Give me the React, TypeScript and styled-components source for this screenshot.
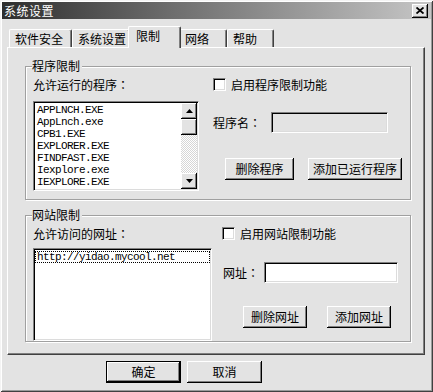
import React from 'react';
import styled, { createGlobalStyle } from 'styled-components';

const FACE = '#e3e3e3';

const GlobalStyle = createGlobalStyle`
  html, body {
    margin: 0;
    padding: 0;
    background: ${FACE};
  }
  body {
    font-family: "Noto Sans CJK SC", "Liberation Sans", sans-serif;
    font-size: 12px;
    color: #000;
  }
`;

const Window = styled.div`
  box-sizing: border-box;
  width: 433px;
  height: 392px;
  padding: 2px;
  background: ${FACE};
  box-shadow: inset 1px 1px #f4f4f4, inset -1px -1px #404040, inset 2px 2px #fff, inset -2px -2px #9a9a9a;
  display: flex;
  flex-direction: column;
`;

const TitleBar = styled.div`
  height: 17px;
  display: flex;
  align-items: center;
  justify-content: space-between;
  padding: 0 3px 0 2px;
  background: linear-gradient(90deg, #2e2e2e 0%, #6e6e6e 40%, #c6c6c6 100%);
`;

const TitleText = styled.span`
  color: #fff;
  font-size: 12px;
  line-height: 12px;
  letter-spacing: 0.5px;
`;

const CloseButton = styled.div`
  box-sizing: border-box;
  width: 16px;
  height: 14px;
  background: ${FACE};
  box-shadow: inset -1px -1px #000, inset 1px 1px #fff, inset -2px -2px #808080;
  display: flex;
  align-items: center;
  justify-content: center;
  padding: 0 1px 1px 0;
`;

const TabStrip = styled.div`
  display: flex;
  align-items: flex-end;
  height: 28px;
  padding-left: 7px;
  position: relative;
  z-index: 1;
`;

const Tab = styled.div<{ $w: number; $active?: boolean }>`
  box-sizing: border-box;
  width: ${p => p.$w}px;
  height: ${p => (p.$active ? 22 : 18)}px;
  margin: 0 ${p => (p.$active ? -2 : 0)}px ${p => (p.$active ? -1 : 0)}px;
  padding: 3px 0 0 ${p => (p.$active ? 7 : 5)}px;
  line-height: 12px;
  white-space: nowrap;
  background: ${FACE};
  border-top: 1px solid #fff;
  border-left: 1px solid #fff;
  border-right: 1px solid #404040;
  box-shadow: inset -1px 0 #808080;
  border-radius: 2px 2px 0 0;
  position: relative;
  z-index: ${p => (p.$active ? 2 : 1)};
`;

const Panel = styled.div`
  margin: 0 6px 0 5px;
  border: 1px solid;
  border-color: #fff #404040 #404040 #fff;
  box-shadow: inset -1px -1px #808080;
  padding: 18px 13px 12px 17px;
  display: flex;
  flex-direction: column;
  gap: 15px;
`;

const Group = styled.div<{ $colGap: number; $bottom: number }>`
  position: relative;
  border: 1px solid #a0a0a0;
  box-shadow: inset 1px 1px #fff, 1px 1px #fff;
  padding: 12px 0 ${p => p.$bottom}px 7px;
  display: flex;
  gap: ${p => p.$colGap}px;
`;

const Legend = styled.span`
  position: absolute;
  top: -7px;
  left: 6px;
  line-height: 12px;
  padding-right: 2px;
  background: ${FACE};
`;

const LeftColumn = styled.div<{ $gap: number }>`
  display: flex;
  flex-direction: column;
  gap: ${p => p.$gap}px;
`;

const Label = styled.span`
  line-height: 12px;
  white-space: nowrap;
`;

// full-width colon drawn centred, as in the old bitmap font
const Colon = styled.span`
  font-family: "Noto Sans CJK JP", "Noto Sans CJK SC", sans-serif;
`;

const ListBox = styled.div<{ $w: number; $h: number }>`
  box-sizing: border-box;
  width: ${p => p.$w}px;
  height: ${p => p.$h}px;
  background: #fff;
  border: 1px solid;
  border-color: #808080 #fff #fff #808080;
  box-shadow: inset 1px 1px #000, inset -1px -1px #dcdcdc;
  padding: 1px;
  display: flex;
`;

const Items = styled.div`
  flex: 1;
  overflow: hidden;
  padding-top: 1px;
`;

const Item = styled.div<{ $focus?: boolean }>`
  font-family: "Liberation Mono", "DejaVu Sans Mono", monospace;
  font-size: 11px;
  letter-spacing: -0.6px;
  line-height: 12px;
  padding-left: 2px;
  white-space: nowrap;
  outline: ${p => (p.$focus ? '1px dotted #000' : 'none')};
  outline-offset: -1px;
`;

const ScrollBar = styled.div`
  width: 16px;
  display: flex;
  flex-direction: column;
  background: repeating-conic-gradient(#fff 0 25%, #d6d6d6 0 50%) 0 0 / 2px 2px;
`;

const ScrollButton = styled.div`
  box-sizing: border-box;
  width: 16px;
  height: 16px;
  background: ${FACE};
  box-shadow: inset -1px -1px #000, inset 1px 1px #fff, inset -2px -2px #808080;
  display: flex;
  align-items: center;
  justify-content: center;
`;

const Thumb = styled(ScrollButton)`
  margin-bottom: auto;
`;

const RightColumn = styled.div`
  display: flex;
  flex-direction: column;
`;

const CheckRow = styled.label`
  display: flex;
  align-items: center;
  gap: 5px;
  line-height: 12px;
  margin-top: -1px;
`;

const CheckBox = styled.span`
  box-sizing: border-box;
  width: 13px;
  height: 13px;
  background: #fff;
  border: 1px solid;
  border-color: #808080 #fff #fff #808080;
  box-shadow: inset 1px 1px #000, inset -1px -1px #dcdcdc;
`;

const FieldRow = styled.div<{ $top: number; $gap: number; $indent: number }>`
  display: flex;
  align-items: center;
  margin-top: ${p => p.$top}px;
  padding-left: ${p => p.$indent}px;
  gap: ${p => p.$gap}px;
`;

const TextField = styled.div<{ $w: number; $disabled?: boolean }>`
  box-sizing: border-box;
  width: ${p => p.$w}px;
  height: 21px;
  background: ${p => (p.$disabled ? FACE : '#fff')};
  border: 1px solid;
  border-color: #808080 #fff #fff #808080;
  box-shadow: inset 1px 1px #000, inset -1px -1px #dcdcdc;
`;

const ButtonRow = styled.div<{ $top: number; $gap: number; $indent: number }>`
  display: flex;
  margin-top: ${p => p.$top}px;
  padding-left: ${p => p.$indent}px;
  gap: ${p => p.$gap}px;
`;

const Button = styled.button<{ $w: number; $default?: boolean }>`
  box-sizing: border-box;
  width: ${p => p.$w}px;
  height: 22px;
  padding: 0;
  font-family: "Noto Sans CJK SC", "Liberation Sans", sans-serif;
  font-size: 12px;
  line-height: 12px;
  color: #000;
  background: ${FACE};
  border: ${p => (p.$default ? '1px solid #000' : 'none')};
  box-shadow: inset -1px -1px #000, inset 1px 1px #fff, inset -2px -2px #808080;
  white-space: nowrap;
`;

const DialogButtons = styled.div`
  display: flex;
  gap: 6px;
  margin-top: 6px;
  padding-left: 104px;
`;

const Arrow = ({ down }: { down?: boolean }) => (
  <svg width="7" height="4" viewBox="0 0 7 4">
    <polygon points={down ? '0,0 7,0 3.5,4' : '3.5,0 7,4 0,4'} fill="#000" />
  </svg>
);

const CloseIcon = () => (
  <svg width="8" height="7" viewBox="0 0 8 7">
    <path d="M0.5 0.5 L7.5 6.5 M7.5 0.5 L0.5 6.5" stroke="#000" strokeWidth="1.8" />
  </svg>
);

const programs = [
  'APPLNCH.EXE',
  'AppLnch.exe',
  'CPB1.EXE',
  'EXPLORER.EXE',
  'FINDFAST.EXE',
  'Iexplore.exe',
  'IEXPLORE.EXE',
  'INTERNAT.EXE',
];

const tabs = [
  { label: '软件安全', w: 63 },
  { label: '系统设置', w: 58 },
  { label: '限制', w: 53, active: true },
  { label: '网络', w: 48 },
  { label: '帮助', w: 47 },
];

export default function App() {
  return (
    <>
      <GlobalStyle />
      <Window>
        <TitleBar>
          <TitleText>系统设置</TitleText>
          <CloseButton>
            <CloseIcon />
          </CloseButton>
        </TitleBar>

        <TabStrip>
          {tabs.map(t => (
            <Tab key={t.label} $w={t.w} $active={t.active}>
              {t.label}
            </Tab>
          ))}
        </TabStrip>

        <Panel>
          <Group $colGap={14} $bottom={8}>
            <Legend>程序限制</Legend>
            <LeftColumn $gap={10}>
              <Label>允许运行的程序<Colon>：</Colon></Label>
              <ListBox $w={166} $h={90}>
                <Items>
                  {programs.map(p => (
                    <Item key={p}>{p}</Item>
                  ))}
                </Items>
                <ScrollBar>
                  <ScrollButton>
                    <Arrow />
                  </ScrollButton>
                  <Thumb />
                  <ScrollButton>
                    <Arrow down />
                  </ScrollButton>
                </ScrollBar>
              </ListBox>
            </LeftColumn>
            <RightColumn>
              <CheckRow>
                <CheckBox />
                启用程序限制功能
              </CheckRow>
              <FieldRow $top={21} $gap={10} $indent={0}>
                <Label>程序名<Colon>：</Colon></Label>
                <TextField $w={117} $disabled />
              </FieldRow>
              <ButtonRow $top={25} $gap={14} $indent={12}>
                <Button $w={69}>删除程序</Button>
                <Button $w={94}>添加已运行程序</Button>
              </ButtonRow>
            </RightColumn>
          </Group>

          <Group $colGap={10} $bottom={0}>
            <Legend>网站限制</Legend>
            <LeftColumn $gap={8}>
              <Label>允许访问的网址<Colon>：</Colon></Label>
              <ListBox $w={179} $h={93}>
                <Items>
                  <Item $focus>http://yidao.mycool.net</Item>
                </Items>
              </ListBox>
            </LeftColumn>
            <RightColumn>
              <CheckRow>
                <CheckBox />
                启用网站限制功能
              </CheckRow>
              <FieldRow $top={22} $gap={5} $indent={1}>
                <Label>网址<Colon>：</Colon></Label>
                <TextField $w={134} />
              </FieldRow>
              <ButtonRow $top={23} $gap={20} $indent={21}>
                <Button $w={64}>删除网址</Button>
                <Button $w={64}>添加网址</Button>
              </ButtonRow>
            </RightColumn>
          </Group>
        </Panel>

        <DialogButtons>
          <Button $w={75} $default>确定</Button>
          <Button $w={75}>取消</Button>
        </DialogButtons>
      </Window>
    </>
  );
}
